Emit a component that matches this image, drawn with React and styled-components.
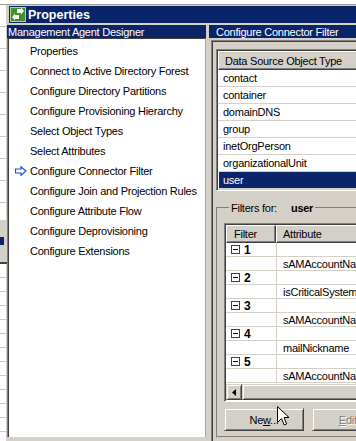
import React from "react";
import styled, { createGlobalStyle } from "styled-components";

const steps = [
  "Properties",
  "Connect to Active Directory Forest",
  "Configure Directory Partitions",
  "Configure Provisioning Hierarchy",
  "Select Object Types",
  "Select Attributes",
  "Configure Connector Filter",
  "Configure Join and Projection Rules",
  "Configure Attribute Flow",
  "Configure Deprovisioning",
  "Configure Extensions"
];

const objectTypes = [
  "contact",
  "container",
  "domainDNS",
  "group",
  "inetOrgPerson",
  "organizationalUnit",
  "user"
];

const filters = [
  { id: 1, attr: "sAMAccountName" },
  { id: 2, attr: "isCriticalSystemObject" },
  { id: 3, attr: "sAMAccountName" },
  { id: 4, attr: "mailNickname" },
  { id: 5, attr: "sAMAccountName" }
];

const GlobalStyle = createGlobalStyle`
  html, body {
    margin: 0;
    padding: 0;
    background: #ffffff;
  }
  body {
    font-family: "Liberation Sans", Arial, sans-serif;
    font-size: 11px;
    letter-spacing: -0.25px;
    color: #000000;
  }
`;

const Screen = styled.div`
  position: relative;
  width: 356px;
  height: 441px;
  overflow: hidden;
  display: flex;
  flex-direction: column;
  background: #ffffff;
`;

const TopStrip = styled.div`
  height: 4px;
  flex: none;
  border-bottom: 1px solid #9c9c9c;
  background: #ffffff;
`;

const Desk = styled.div`
  flex: 1;
  display: flex;
  min-height: 0;
`;

const BackStrip = styled.div`
  width: 7px;
  flex: none;
  display: flex;
  flex-direction: column;
`;

const BackLines = styled.div`
  height: ${(p) => p.$h}px;
  flex: none;
  background: repeating-linear-gradient(
    to bottom,
    #ffffff 0,
    #ffffff ${(p) => p.$step - 1}px,
    #c8c8c8 ${(p) => p.$step - 1}px,
    #c8c8c8 ${(p) => p.$step}px
  );
  border-right: 1px solid #d4d0c8;
  box-sizing: border-box;
`;

const BackTool = styled.div`
  height: 42px;
  flex: none;
  background: #d4d0c8;
  border-bottom: 2px solid #404040;
  display: flex;
  flex-direction: column;
  justify-content: center;
`;

const BackSelect = styled.div`
  height: 8px;
  width: 4px;
  background: #0a246a;
`;

const Dialog = styled.div`
  flex: 1;
  display: flex;
  flex-direction: column;
  background: #d4d0c8;
  padding-top: 1px;
  min-width: 0;
`;

const TitleBar = styled.div`
  height: 17px;
  margin-left: 2px;
  flex: none;
  display: flex;
  align-items: center;
  gap: 2px;
  padding-left: 1px;
  background: #0a246a;
  color: #ffffff;
  font-weight: bold;
  font-size: 12.5px;
  letter-spacing: 0;
`;

const Main = styled.div`
  flex: 1;
  display: flex;
  margin-top: 2px;
  min-height: 0;
`;

const LeftPane = styled.div`
  width: 199px;
  flex: none;
  display: flex;
  flex-direction: column;
`;

const PaneHeader = styled.div`
  height: 13px;
  flex: none;
  display: flex;
  align-items: center;
  padding-left: ${(p) => p.$pad}px;
  background: #0a246a;
  color: #ffffff;
  white-space: nowrap;
  overflow: hidden;
`;

const StepList = styled.div`
  height: 399px;
  box-sizing: border-box;
  background: #ffffff;
  border-top: 1px solid #404040;
  border-left: 1px solid #808080;
  border-right: 1px solid #a8a8a8;
  box-shadow: inset 1px 0 0 #404040;
  padding-top: 2px;
  overflow: hidden;
`;

const Step = styled.div`
  display: grid;
  grid-template-columns: 22px auto;
  align-items: center;
  height: 20px;
  white-space: nowrap;
`;

const Marker = styled.svg`
  margin-left: 7px;
`;

const Splitter = styled.div`
  width: 3px;
  flex: none;
`;

const RightPane = styled.div`
  flex: 1;
  display: flex;
  flex-direction: column;
  min-width: 0;
`;

const Frame = styled.div`
  flex: 1;
  margin: 2px 0 0 2px;
  border-top: 1px solid #808080;
  border-left: 1px solid #808080;
  box-shadow: inset 1px 1px 0 #404040;
  padding: 8px 0 0 4px;
  display: flex;
  flex-direction: column;
  min-width: 0;
`;

const Sunken = styled.div`
  border-style: solid;
  border-width: 1px;
  border-color: #808080 #ffffff #ffffff #808080;
  box-shadow: inset 1px 1px 0 #404040, inset -1px -1px 0 #d4d0c8;
  padding: 1px;
  background: #ffffff;
`;

const ObjectList = styled(Sunken)`
  width: 220px;
`;

const HeaderCell = styled.div`
  height: ${(p) => p.$h || 18}px;
  box-sizing: border-box;
  display: flex;
  align-items: center;
  padding-left: ${(p) => p.$pad || 6}px;
  width: ${(p) => (p.$w ? `${p.$w}px` : "auto")};
  flex: ${(p) => (p.$w ? "none" : "1")};
  background: #d4d0c8;
  border-top: 1px solid #ffffff;
  border-left: 1px solid #ffffff;
  border-bottom: 1px solid #404040;
  border-right: 1px solid #404040;
  box-shadow: inset -1px -1px 0 #808080;
  white-space: nowrap;
`;

const ListRow = styled.div`
  height: 16px;
  display: flex;
  align-items: center;
  padding-left: ${(p) => (p.$selected ? 4 : 5)}px;
  margin-left: ${(p) => (p.$selected ? 1 : 0)}px;
  border-bottom: 1px solid #d4d0c8;
  background: ${(p) => (p.$selected ? "#0a246a" : "#ffffff")};
  color: ${(p) => (p.$selected ? "#ffffff" : "#000000")};
  white-space: nowrap;
`;

const FilterGroup = styled.fieldset`
  margin: 11px 0 3px 0;
  padding: 9px 0 0 6px;
  border: 2px groove #d4d0c8;
  border-right: none;
  min-width: 0;
  flex: 1;
`;

const Legend = styled.legend`
  margin-left: 5px;
  padding: 0 2px;
  white-space: nowrap;
`;

const Bold = styled.b`
  margin-left: 14px;
`;

const FilterGrid = styled(Sunken)`
  width: 200px;
  padding: 0;
  box-shadow: inset 1px 1px 0 #404040;
`;

const GridHeader = styled.div`
  display: flex;
  margin: 1px 0 0 1px;
`;

const GridBody = styled.div`
  height: 141px;
  overflow: hidden;
  margin-left: 1px;
`;

const GridRow = styled.div`
  display: flex;
  height: 14px;
`;

const Cell = styled.div`
  box-sizing: border-box;
  width: ${(p) => (p.$w ? `${p.$w}px` : "auto")};
  flex: ${(p) => (p.$w ? "none" : "1")};
  border-right: 1px solid #d4d0c8;
  border-bottom: 1px solid #d4d0c8;
  display: flex;
  align-items: center;
  padding-left: ${(p) => p.$pad}px;
  gap: 4px;
  white-space: nowrap;
  font-weight: ${(p) => (p.$bold ? "bold" : "normal")};
  font-size: ${(p) => (p.$bold ? 12 : 11)}px;
`;

const Expander = styled.span`
  position: relative;
  width: 9px;
  height: 9px;
  box-sizing: border-box;
  border: 1px solid #404040;
  background: #ffffff;
  flex: none;

  &::after {
    content: "";
    position: absolute;
    left: 1px;
    right: 1px;
    top: 3px;
    height: 1px;
    background: #000000;
  }
`;

const Scrollbar = styled.div`
  display: flex;
  height: 16px;
  margin: 0 0 1px 1px;
`;

const Raised = styled.div`
  box-sizing: border-box;
  background: #d4d0c8;
  border-style: solid;
  border-width: 1px;
  border-color: #d4d0c8 #404040 #404040 #d4d0c8;
  box-shadow: inset 1px 1px 0 #ffffff, inset -1px -1px 0 #808080;
`;

const ScrollArrow = styled(Raised)`
  width: 16px;
  display: flex;
  align-items: center;
  justify-content: center;
`;

const ScrollThumb = styled(Raised)`
  flex: 1;
`;

const ButtonRow = styled.div`
  display: flex;
  gap: 8px;
  margin-top: 6px;
`;

const Button = styled(Raised)`
  width: 80px;
  height: 23px;
  flex: none;
  display: flex;
  align-items: center;
  justify-content: center;
  color: ${(p) => (p.$disabled ? "#808080" : "#000000")};
  text-shadow: ${(p) => (p.$disabled ? "1px 1px 0 #ffffff" : "none")};
`;

const Cursor = styled.svg`
  position: absolute;
  left: 277px;
  top: 406px;
`;

const AppIcon = () => (
  <svg width="16" height="15" viewBox="0 0 16 15">
    <rect x="0.5" y="0.5" width="15" height="14" fill="#3f8f2a" stroke="#a6dc8c" />
    <path d="M7 2 L11 2 L11 0.5 L14 4 L11 7.5 L11 6 L7 6 Z" fill="#ffffff" />
    <path d="M9 8 L5 8 L5 6.5 L2 10 L5 13.5 L5 12 L9 12 Z" fill="#ffffff" />
  </svg>
);

const StepArrow = () => (
  <Marker width="12" height="10" viewBox="0 0 12 10">
    <path
      d="M0.5 3 H6 V0.8 L11 5 L6 9.2 V7 H0.5 Z"
      fill="#ffffff"
      stroke="#1c4cd6"
      strokeWidth="1.2"
    />
  </Marker>
);

const App = () => {
  const rows = [];
  filters.forEach((f) => {
    rows.push(
      <GridRow key={`h${f.id}`}>
        <Cell $w={51} $pad={5} $bold>
          <Expander />
          {f.id}
        </Cell>
        <Cell $pad={6} />
      </GridRow>
    );
    rows.push(
      <GridRow key={`a${f.id}`}>
        <Cell $w={51} $pad={5} />
        <Cell $pad={6}>{f.attr}</Cell>
      </GridRow>
    );
  });

  return (
    <Screen>
      <GlobalStyle />
      <TopStrip />
      <Desk>
        <BackStrip>
          <BackLines $h={215} $step={22} />
          <BackTool>
            <BackSelect />
          </BackTool>
          <BackLines $h={200} $step={14} />
        </BackStrip>
        <Dialog>
          <TitleBar>
            <AppIcon />
            Properties
          </TitleBar>
          <Main>
            <LeftPane>
              <PaneHeader $pad={1}>Management Agent Designer</PaneHeader>
              <StepList>
                {steps.map((s) => (
                  <Step key={s}>
                    {s === "Configure Connector Filter" ? <StepArrow /> : <span />}
                    <span>{s}</span>
                  </Step>
                ))}
              </StepList>
            </LeftPane>
            <Splitter />
            <RightPane>
              <PaneHeader $pad={7}>Configure Connector Filter</PaneHeader>
              <Frame>
                <ObjectList>
                  <HeaderCell $h={19}>Data Source Object Type</HeaderCell>
                  {objectTypes.map((t) => (
                    <ListRow key={t} $selected={t === "user"}>
                      {t}
                    </ListRow>
                  ))}
                </ObjectList>
                <FilterGroup>
                  <Legend>
                    Filters for:<Bold>user</Bold>
                  </Legend>
                  <FilterGrid>
                    <GridHeader>
                      <HeaderCell $w={50} $pad={7}>Filter</HeaderCell>
                      <HeaderCell $pad={6}>Attribute</HeaderCell>
                    </GridHeader>
                    <GridBody>{rows}</GridBody>
                    <Scrollbar>
                      <ScrollArrow>
                        <svg width="4" height="7" viewBox="0 0 4 7">
                          <path d="M4 0 L0 3.5 L4 7 Z" fill="#000000" />
                        </svg>
                      </ScrollArrow>
                      <ScrollThumb />
                    </Scrollbar>
                  </FilterGrid>
                  <ButtonRow>
                    <Button>
                      <span>
                        Ne<u>w</u>...
                      </span>
                    </Button>
                    <Button $disabled>
                      <span>
                        <u>E</u>dit...
                      </span>
                    </Button>
                  </ButtonRow>
                </FilterGroup>
              </Frame>
            </RightPane>
          </Main>
        </Dialog>
      </Desk>
      <Cursor width="13" height="21" viewBox="0 0 13 21">
        <path
          d="M0.5 0.5 L0.5 16.5 L4.5 12.5 L7.2 19 L9.6 18 L7 11.5 L12 11.5 Z"
          fill="#ffffff"
          stroke="#000000"
          strokeWidth="1"
        />
      </Cursor>
    </Screen>
  );
};

export default App;
